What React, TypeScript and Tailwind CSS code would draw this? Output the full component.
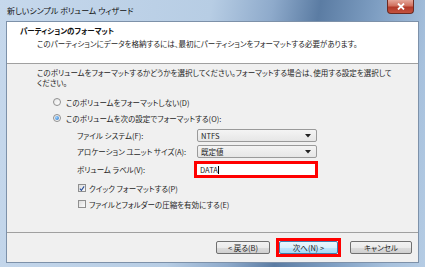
import React from 'react';

const FONT = "font-['Meiryo_UI','Noto_Sans_CJK_JP',sans-serif] [font-feature-settings:'palt']";

const Radio: React.FC<{ checked?: boolean; label: string }> = ({ checked, label }) => (
  <div className="flex items-center h-[12px] pl-[46px]">
    <span className="w-[8px] h-[8px] rounded-full border border-[#8f8f8f] bg-[linear-gradient(135deg,#e6e6e6,#ffffff)] flex items-center justify-center">
      {checked && <span className="w-[4px] h-[4px] rounded-full bg-[radial-gradient(circle_at_35%_35%,#9fd2ff,#1f6fc5)]" />}
    </span>
    <span className="ml-[5px]">{label}</span>
  </div>
);

const Check: React.FC<{ checked?: boolean; label: string }> = ({ checked, label }) => (
  <div className="flex items-center h-[10px] pl-[71px]">
    <span className="w-[8px] h-[8px] border border-[#8f8f8f] bg-[linear-gradient(135deg,#dcdcdc,#fbfbfb)] flex items-center justify-center">
      {checked && (
        <svg width="7" height="7" viewBox="0 0 7 7">
          <path d="M1 3.6 L2.8 5.6 L6 1" stroke="#2a4f9a" strokeWidth="1.3" fill="none" />
        </svg>
      )}
    </span>
    <span className="ml-[3px]">{label}</span>
  </div>
);

const Select: React.FC<{ value: string }> = ({ value }) => (
  <div className="w-[120px] h-[13px] rounded-[2px] border border-[#9a9a9a] bg-[linear-gradient(#f4f4f4,#e6e6e6)] flex items-center justify-between pl-[3px] pr-[5px]">
    <span>{value}</span>
    <svg width="6" height="4" viewBox="0 0 6 4">
      <path d="M0 0 H6 L3 3.5 Z" fill="#222" />
    </svg>
  </div>
);

const Btn: React.FC<{ label: string; w: string; active?: boolean }> = ({ label, w, active }) => (
  <div
    className={`${w} h-[13px] rounded-[2px] border flex items-center justify-center ${
      active
        ? 'border-[#3c7fb1] bg-[linear-gradient(#eaf6fd_0%,#d9f0fc_50%,#bee6fd_51%,#a7d9f5_100%)]'
        : 'border-[#707070] bg-[linear-gradient(#f2f2f2_0%,#ebebeb_50%,#dddddd_51%,#cfcfcf_100%)]'
    }`}
  >
    {label}
  </div>
);

export default function App() {
  return (
    <div className={`w-[425px] h-[267px] relative overflow-hidden text-[7.5px] leading-[9px] text-[#1e1e1e] ${FONT} bg-[linear-gradient(100deg,#c6d8ec_0%,#b7cde4_45%,#8eaacb_58%,#5b7ca3_68%,#7e9ec2_80%,#a7c1dd_92%,#b5cce4_100%)]`}>
      {/* title bar */}
      <div className="h-[21px] flex items-center pl-[7px] pb-[1px] text-[8px] text-[#111]">
        新しいシンプル ボリューム ウィザード
      </div>
      <div className="absolute top-0 right-[11px] w-[27px] h-[14px] rounded-b-[4px] border border-t-0 border-[#6b2a22] bg-[linear-gradient(#e5a79b_0%,#d0705e_45%,#b2392a_55%,#c4533e_100%)] flex items-center justify-center">
        <svg width="8" height="7" viewBox="0 0 8 7">
          <path d="M1 0.5 L7 6.5 M7 0.5 L1 6.5" stroke="#fff" strokeWidth="1.8" />
        </svg>
      </div>

      {/* client */}
      <div className="mx-[6px] h-[242px] border border-[#7d91a9] bg-[#f0f0f0] flex flex-col">
        <div className="h-[42px] bg-white border-b border-[#a0a0a0] pt-[4px]">
          <div className="pl-[13px] font-bold text-[#111] leading-[10px]">パーティションのフォーマット</div>
          <div className="pl-[30px] mt-[3px] whitespace-nowrap">このパーティションにデータを格納するには、最初にパーティションをフォーマットする必要があります。</div>
        </div>

        <div className="h-[168px] pt-[4px]">
          <div className="pl-[30px] whitespace-nowrap leading-[10px]">
            <div>このボリュームをフォーマットするかどうかを選択してください。フォーマットする場合は、使用する設定を選択して</div>
            <div>ください。</div>
          </div>
          <div className="mt-[8px] flex flex-col gap-[4px]">
            <Radio label="このボリュームをフォーマットしない(D)" />
            <Radio checked label="このボリュームを次の設定でフォーマットする(O):" />
          </div>
          <div className="mt-[5px] flex flex-col">
            <div className="flex items-center h-[13px] pl-[70px]">
              <span className="w-[120px]">ファイル システム(F):</span>
              <Select value="NTFS" />
            </div>
            <div className="flex items-center h-[13px] pl-[70px] mt-[3px]">
              <span className="w-[120px]">アロケーション ユニット サイズ(A):</span>
              <Select value="既定値" />
            </div>
            <div className="flex items-center h-[17px] pl-[70px] mt-[3px]">
              <span className="w-[117px]">ボリューム ラベル(V):</span>
              <div className="w-[124px] h-[17px] border-[3px] border-[#ff0000] bg-white flex items-center pl-[3px]">
                DATA<span className="w-px h-[8px] bg-black" />
              </div>
            </div>
          </div>
          <div className="mt-[5px] flex flex-col gap-[6px]">
            <Check checked label="クイック フォーマットする(P)" />
            <Check label="ファイルとフォルダーの圧縮を有効にする(E)" />
          </div>
        </div>

        <div className="flex-1 border-t border-[#a0a0a0] flex items-center justify-end pr-[6px]">
          <Btn label="< 戻る(B)" w="w-[54px]" />
          <div className="ml-[6px] border-[3px] border-[#ff0000]">
            <Btn label="次へ(N) >" w="w-[59px]" active />
          </div>
          <div className="ml-[9px]">
            <Btn label="キャンセル" w="w-[62px]" />
          </div>
        </div>
      </div>
    </div>
  );
}
